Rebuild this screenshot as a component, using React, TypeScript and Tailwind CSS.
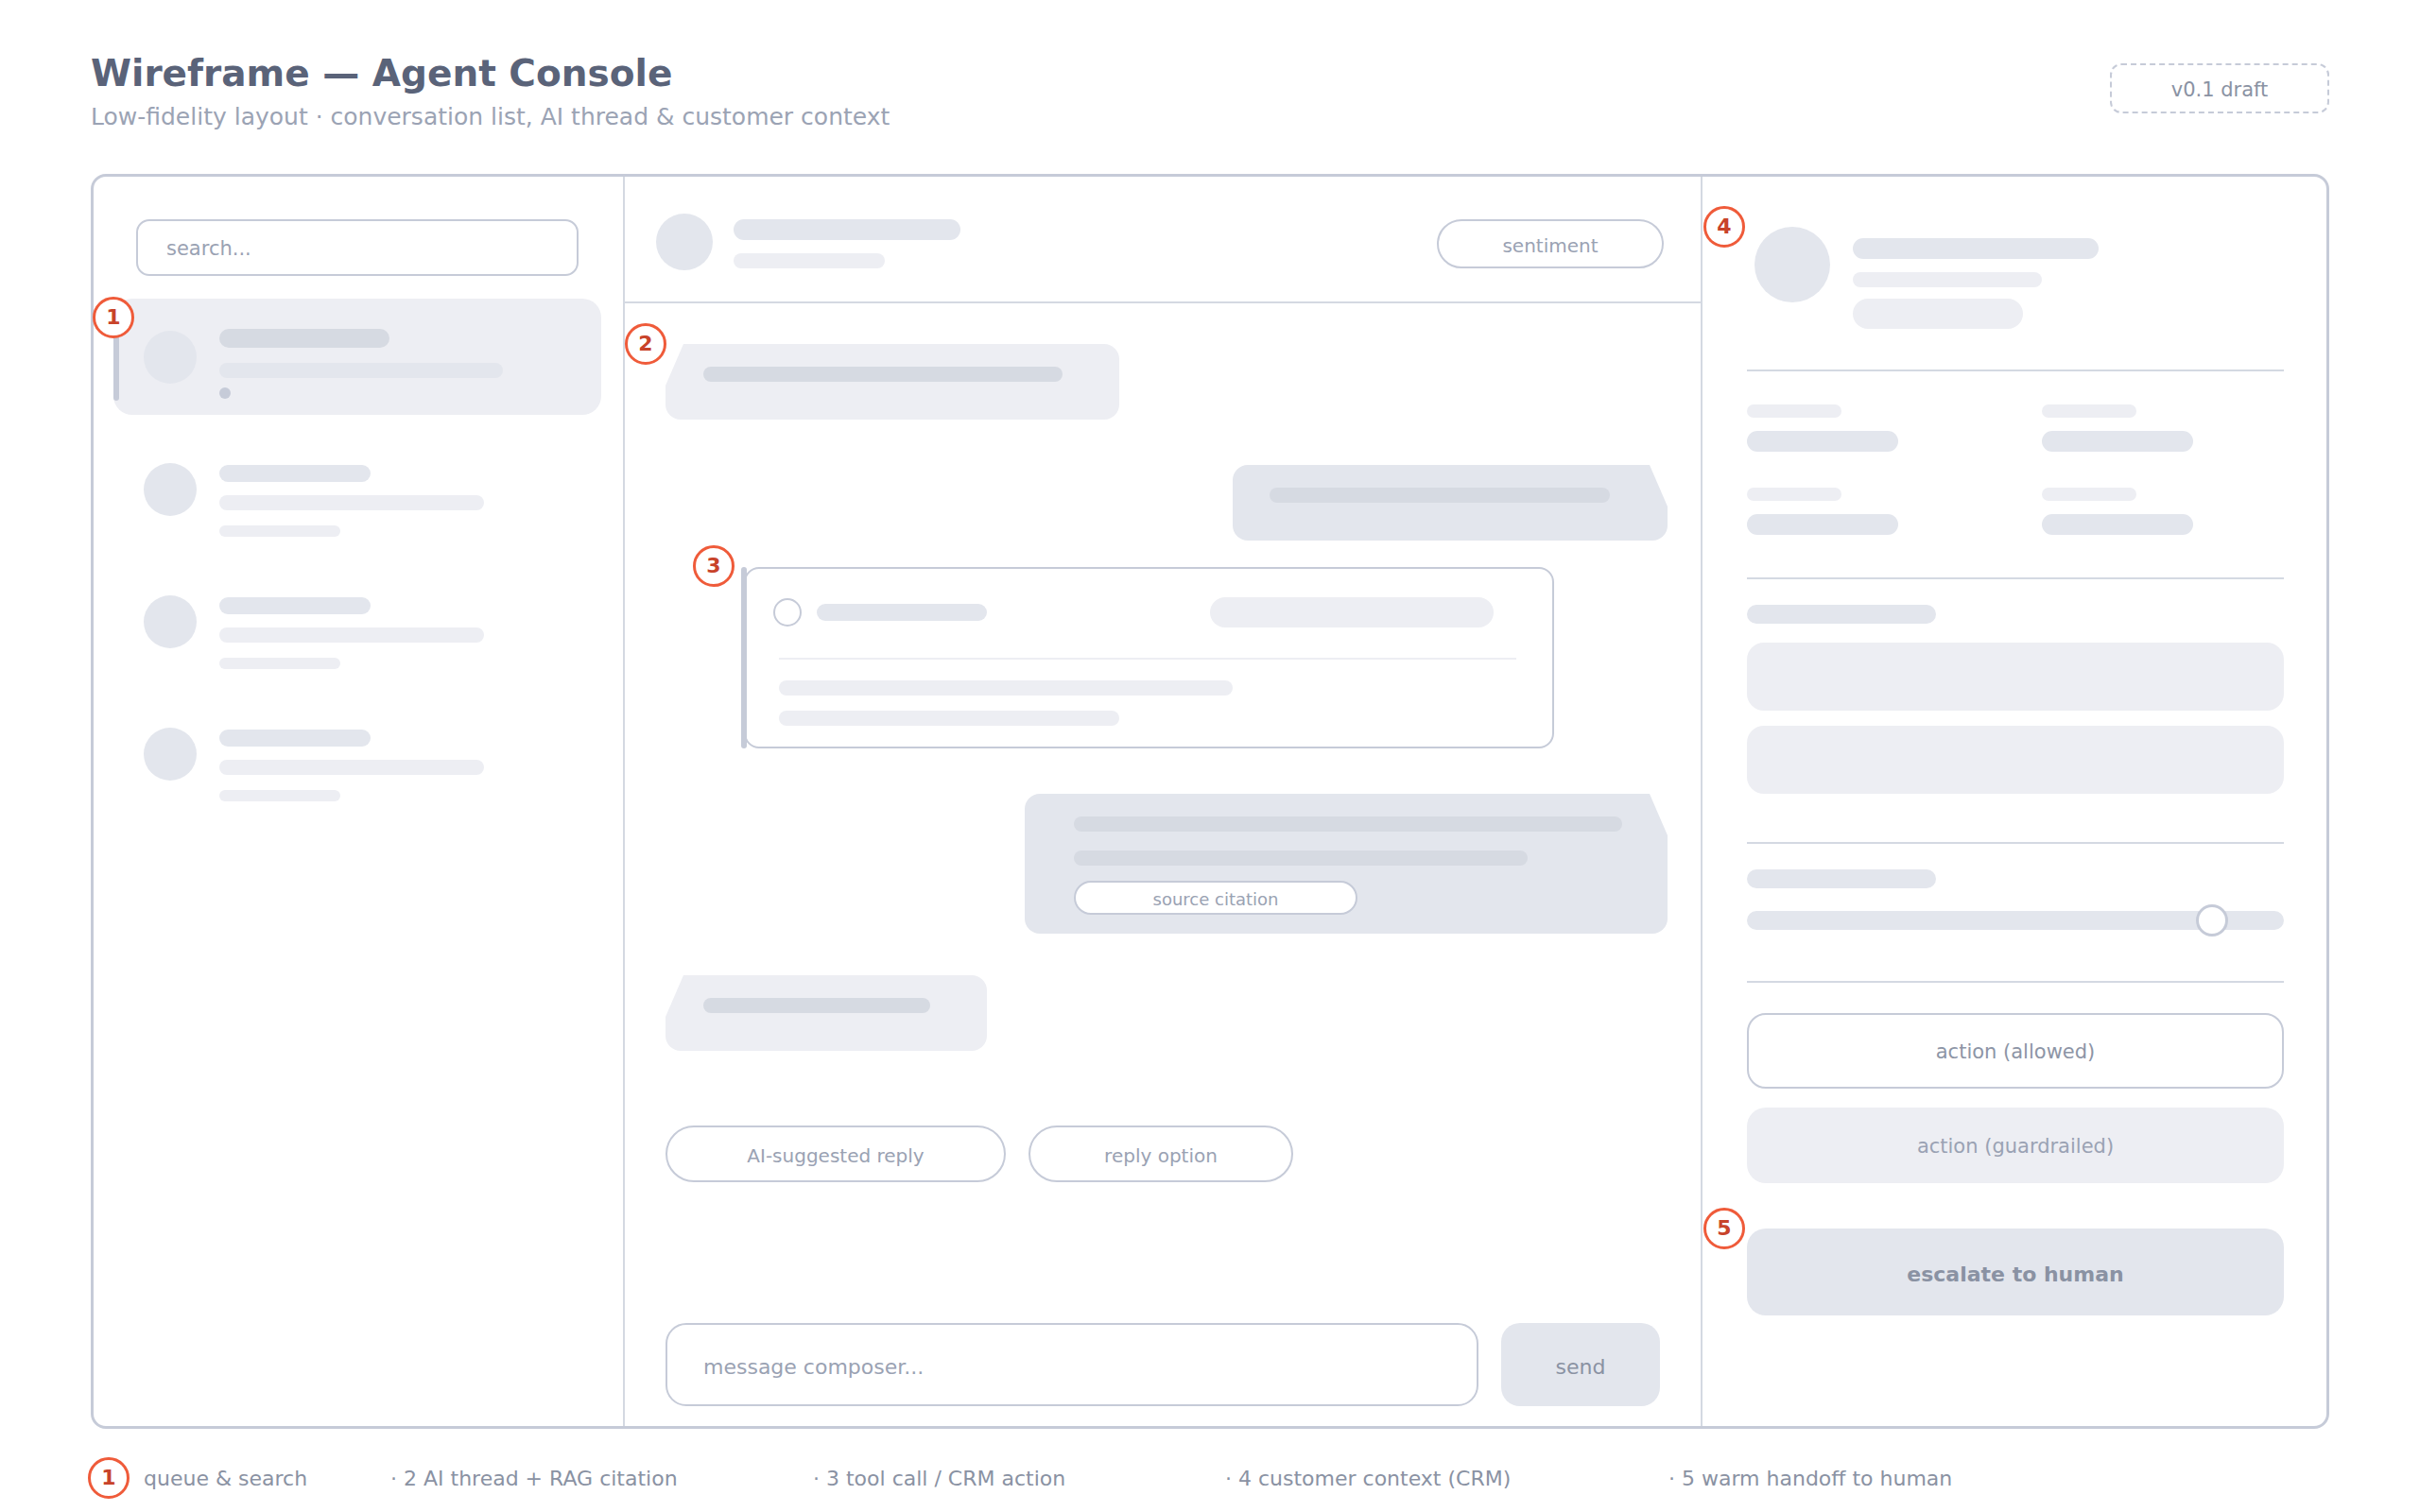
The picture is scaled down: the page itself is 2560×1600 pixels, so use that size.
import React from 'react';

const Badge = ({ n, className = '' }: { n: number; className?: string }) => (
    <div className={`flex h-[44px] w-[44px] shrink-0 items-center justify-center rounded-full border-[3px] border-[#ef5b3a] bg-white text-[22px] font-bold leading-none text-[#c8432a] ${className}`}>
        {n}
    </div>
);

const Bar = ({ className }: { className: string }) => <div className={`shrink-0 rounded-full ${className}`} />;

const incoming = '[clip-path:polygon(19px_0,100%_0,100%_100%,0_100%,0_44px)]';
const outgoing = '[clip-path:polygon(0_0,calc(100%_-_19px)_0,100%_44px,100%_100%,0_100%)]';

const ConversationRow = () => (
    <div className="ml-[53px] flex h-[140px] gap-[24px]">
        <div className="h-[56px] w-[56px] rounded-full bg-[#e3e6ed]" />
        <div className="mt-[2px] flex flex-col">
            <Bar className="h-[18px] w-[160px] bg-[#e3e6ed]" />
            <Bar className="mt-[14px] h-[16px] w-[280px] bg-[#edeef3]" />
            <Bar className="mt-[16px] h-[12px] w-[128px] bg-[#edeef3]" />
        </div>
    </div>
);

const QueueColumn = () => (
    <div className="flex w-[562px] shrink-0 flex-col border-r-2 border-[#d4d9e2]">
        <div className="ml-[45px] mt-[45px] flex h-[60px] w-[468px] items-center rounded-[14px] border-2 border-[#c6cbd8] pl-[30px] pt-[4px] text-[21px] text-[#9aa2b3]">
            search...
        </div>
        <div className="relative ml-[21px] mt-[24px] h-[123px] w-[516px] shrink-0 rounded-[20px] bg-[#edeef3]">
            <div className="absolute left-0 top-[24px] h-[84px] w-[6px] rounded-full bg-[#c6cbd8]" />
            <Badge n={1} className="absolute left-[-22px] top-[-2px]" />
            <div className="flex gap-[24px] pl-[32px] pt-[34px]">
                <div className="h-[56px] w-[56px] rounded-full bg-[#e3e6ed]" />
                <div className="-mt-[2px] flex flex-col">
                    <Bar className="h-[20px] w-[180px] bg-[#d6dae2]" />
                    <Bar className="mt-[16px] h-[16px] w-[300px] bg-[#e3e6ed]" />
                    <Bar className="mt-[10px] h-[12px] w-[12px] bg-[#c6cbd8]" />
                </div>
            </div>
        </div>
        <div className="mt-[51px] flex flex-col">
            <ConversationRow />
            <ConversationRow />
            <ConversationRow />
        </div>
    </div>
);

const ThreadColumn = () => (
    <div className="flex w-[1140px] shrink-0 flex-col border-r-2 border-[#d4d9e2]">
        {/* thread header */}
        <div className="flex h-[134px] shrink-0 items-start border-b-2 border-[#d4d9e2] pl-[33px] pt-[39px]">
            <div className="h-[60px] w-[60px] rounded-full bg-[#e3e6ed]" />
            <div className="ml-[22px] mt-[6px] flex flex-col">
                <Bar className="h-[22px] w-[240px] bg-[#e3e6ed]" />
                <Bar className="mt-[14px] h-[16px] w-[160px] bg-[#edeef3]" />
            </div>
            <div className="ml-auto mr-[39px] mt-[6px] flex h-[52px] w-[240px] items-center justify-center rounded-full border-2 border-[#c6cbd8] pt-[4px] text-[20px] text-[#9aa2b3]">
                sentiment
            </div>
        </div>

        {/* messages */}
        <div className="flex flex-1 flex-col pl-[43px]">
            <div className="relative mt-[43px] w-[480px]">
                <Badge n={2} className="absolute left-[-43px] top-[-22px]" />
                <div className={`h-[80px] rounded-[16px] rounded-tl-none bg-[#edeef3] pl-[40px] pt-[24px] ${incoming}`}>
                    <Bar className="h-[16px] w-[380px] bg-[#d6dae2]" />
                </div>
            </div>

            <div className={`mr-[35px] mt-[48px] h-[80px] w-[460px] self-end rounded-[16px] rounded-tr-none bg-[#e3e6ed] pl-[39px] pt-[24px] ${outgoing}`}>
                <Bar className="h-[16px] w-[360px] bg-[#d6dae2]" />
            </div>

            {/* tool call card */}
            <div className="relative ml-[83px] mt-[28px] h-[192px] w-[857px]">
                <div className="h-full rounded-[16px] border-2 border-[#c6cbd8] bg-white pt-[30px]">
                    <div className="flex h-[32px] items-center pl-[29px]">
                        <div className="h-[30px] w-[30px] rounded-full border-2 border-[#c6cbd8]" />
                        <Bar className="ml-[16px] h-[18px] w-[180px] bg-[#e3e6ed]" />
                        <Bar className="ml-[236px] h-[32px] w-[300px] bg-[#edeef3]" />
                    </div>
                    <div className="ml-[35px] mt-[32px] h-[2px] w-[780px] bg-[#edeef3]" />
                    <Bar className="ml-[35px] mt-[22px] h-[16px] w-[480px] bg-[#edeef3]" />
                    <Bar className="ml-[35px] mt-[16px] h-[16px] w-[360px] bg-[#edeef3]" />
                </div>
                <div className="absolute bottom-0 left-[-3px] top-0 w-[6px] rounded-full bg-[#c6cbd8]" />
                <Badge n={3} className="absolute left-[-54px] top-[-23px]" />
            </div>

            <div className={`mr-[35px] mt-[48px] h-[148px] w-[680px] self-end rounded-[16px] rounded-tr-none bg-[#e3e6ed] pl-[52px] pt-[24px] ${outgoing}`}>
                <Bar className="h-[16px] w-[580px] bg-[#d6dae2]" />
                <Bar className="mt-[20px] h-[16px] w-[480px] bg-[#d6dae2]" />
                <div className="mt-[16px] flex h-[36px] w-[300px] items-center justify-center rounded-full border-2 border-[#c6cbd8] bg-white pt-[3px] text-[18px] text-[#9aa2b3]">
                    source citation
                </div>
            </div>

            <div className={`mt-[44px] h-[80px] w-[340px] rounded-[16px] rounded-tl-none bg-[#edeef3] pl-[40px] pt-[24px] ${incoming}`}>
                <Bar className="h-[16px] w-[240px] bg-[#d6dae2]" />
            </div>

            <div className="mt-[79px] flex gap-[24px]">
                <div className="flex h-[60px] w-[360px] items-center justify-center rounded-full border-2 border-[#c6cbd8] pt-[4px] text-[20px] text-[#9aa2b3]">
                    AI-suggested reply
                </div>
                <div className="flex h-[60px] w-[280px] items-center justify-center rounded-full border-2 border-[#c6cbd8] pt-[4px] text-[20px] text-[#9aa2b3]">
                    reply option
                </div>
            </div>

            <div className="mb-[21px] mt-auto flex gap-[24px]">
                <div className="flex h-[88px] w-[860px] items-center rounded-[22px] border-2 border-[#c6cbd8] pl-[38px] pt-[4px] text-[22px] text-[#9aa2b3]">
                    message composer...
                </div>
                <div className="flex h-[88px] w-[168px] items-center justify-center rounded-[20px] bg-[#e3e6ed] pt-[4px] text-[22px] text-[#8a92a3]">
                    send
                </div>
            </div>
        </div>
    </div>
);

const Field = () => (
    <div className="flex w-[312px] shrink-0 flex-col">
        <Bar className="h-[14px] w-[100px] bg-[#edeef3]" />
        <Bar className="mt-[14px] h-[22px] w-[160px] bg-[#e3e6ed]" />
    </div>
);

const ContextColumn = () => (
    <div className="flex flex-1 flex-col">
        <div className="ml-[47px] flex w-[568px] flex-col">
            <div className="relative mt-[53px] flex items-start">
                <Badge n={4} className="absolute left-[-46px] top-[-22px]" />
                <div className="ml-[8px] h-[80px] w-[80px] rounded-full bg-[#e3e6ed]" />
                <div className="ml-[24px] mt-[12px] flex flex-col">
                    <Bar className="h-[22px] w-[260px] bg-[#e3e6ed]" />
                    <Bar className="mt-[14px] h-[16px] w-[200px] bg-[#edeef3]" />
                    <Bar className="mt-[12px] h-[32px] w-[180px] bg-[#edeef3]" />
                </div>
            </div>

            <div className="mt-[43px] h-[2px] bg-[#d4d9e2]" />

            <div className="mt-[35px] flex">
                <Field />
                <Field />
            </div>
            <div className="mt-[38px] flex">
                <Field />
                <Field />
            </div>

            <div className="mt-[45px] h-[2px] bg-[#d4d9e2]" />

            <Bar className="mt-[27px] h-[20px] w-[200px] bg-[#e3e6ed]" />
            <div className="mt-[20px] h-[72px] rounded-[18px] bg-[#edeef3]" />
            <div className="mt-[16px] h-[72px] rounded-[18px] bg-[#edeef3]" />

            <div className="mt-[51px] h-[2px] bg-[#d4d9e2]" />

            <Bar className="mt-[27px] h-[20px] w-[200px] bg-[#e3e6ed]" />
            <div className="relative mt-[24px] h-[20px] rounded-full bg-[#e3e6ed]">
                <div className="absolute left-[475px] top-[-7px] h-[34px] w-[34px] rounded-full border-[3px] border-[#c6cbd8] bg-white" />
            </div>

            <div className="mt-[54px] h-[2px] bg-[#d4d9e2]" />

            <div className="mt-[32px] flex h-[80px] items-center justify-center rounded-[20px] border-2 border-[#c6cbd8] pt-[4px] text-[21px] text-[#8d95a6]">
                action (allowed)
            </div>
            <div className="mt-[20px] flex h-[80px] items-center justify-center rounded-[20px] bg-[#edeef3] pt-[4px] text-[21px] text-[#9aa2b3]">
                action (guardrailed)
            </div>
            <div className="relative mt-[48px] flex h-[92px] items-center justify-center rounded-[20px] bg-[#e3e6ed] pt-[4px] text-[22px] font-bold text-[#8a92a3]">
                <Badge n={5} className="absolute left-[-46px] top-[-22px]" />
                escalate to human
            </div>
        </div>
    </div>
);

const App = () => {
    return (
        <div className="relative h-[1600px] w-[2560px] overflow-hidden bg-white font-['DejaVu_Sans',sans-serif]">
            <div className="flex h-[184px] items-start justify-between px-[96px] pt-[54px]">
                <div>
                    <h1 className="text-[39px] font-bold leading-[48px] text-[#5a6379]">Wireframe — Agent Console</h1>
                    <p className="mt-[7px] text-[25px] leading-[30px] text-[#9ba3b4]">
                        Low-fidelity layout · conversation list, AI thread &amp; customer context
                    </p>
                </div>
                <div className="mt-[13px] flex h-[53px] w-[232px] items-center justify-center rounded-[12px] border-2 border-dashed border-[#c6cbd8] pt-[5px] text-[21px] text-[#8a92a3]">
                    v0.1 draft
                </div>
            </div>

            <div className="ml-[96px] flex h-[1328px] w-[2368px] rounded-[16px] border-[3px] border-[#c6cbd8]">
                <QueueColumn />
                <ThreadColumn />
                <ContextColumn />
            </div>

            <div className="mt-[30px] flex items-center pl-[93px] text-[22px] text-[#8a92a3]">
                <div className="flex w-[320px] items-center gap-[15px]">
                    <Badge n={1} />
                    <span>queue &amp; search</span>
                </div>
                <span className="w-[447px]">· 2 AI thread + RAG citation</span>
                <span className="w-[436px]">· 3 tool call / CRM action</span>
                <span className="w-[469px]">· 4 customer context (CRM)</span>
                <span>· 5 warm handoff to human</span>
            </div>
        </div>
    );
};

export default App;
